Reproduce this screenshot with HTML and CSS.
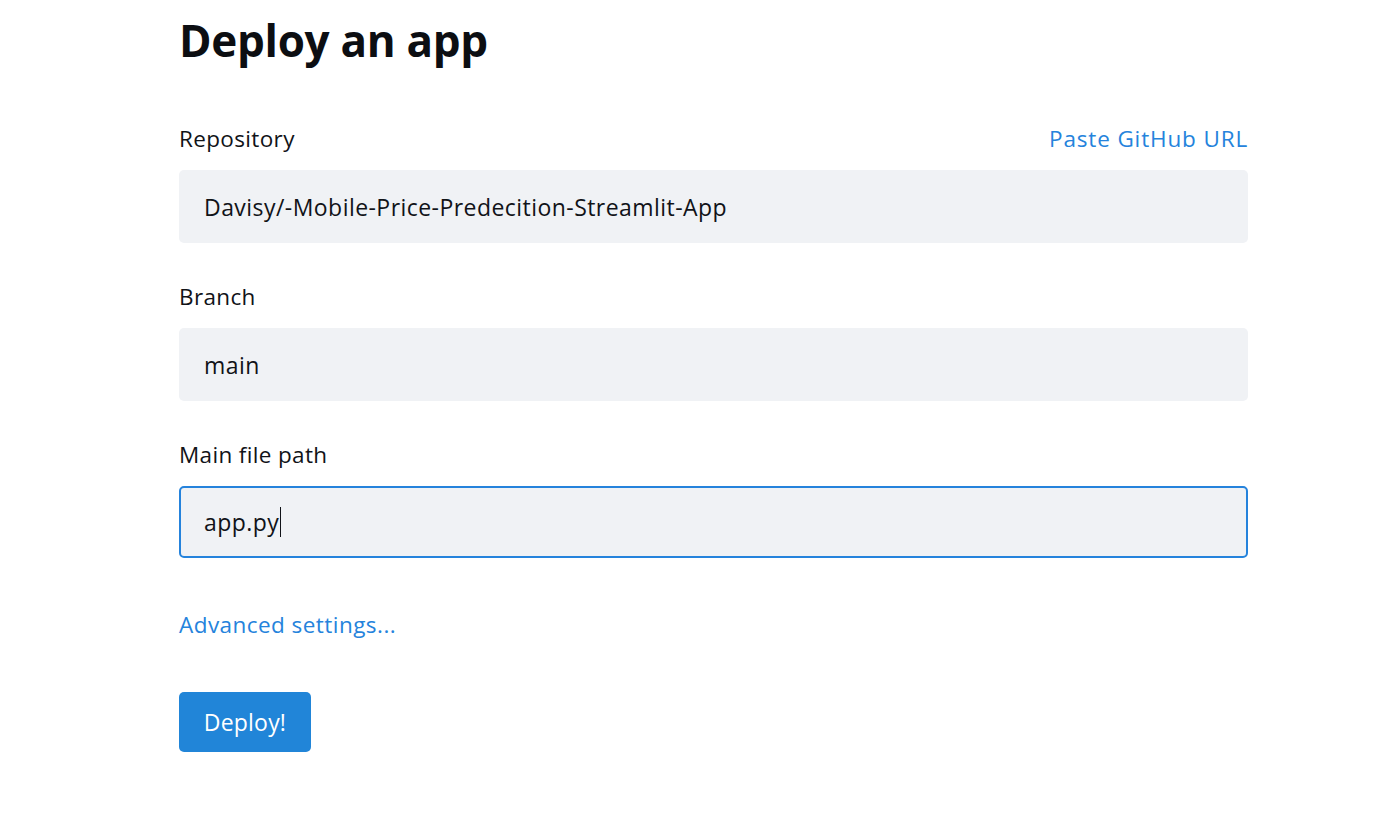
FILE: index.html
```html
<!DOCTYPE html>
<html lang="en">
<head>
<meta charset="utf-8">
<title>Deploy an app</title>
<link rel="stylesheet" href="styles.css">
</head>
<body>
<main class="page">
  <h1 class="title">Deploy an app</h1>
  <form class="form">
    <div class="field">
      <div class="label-row">
        <label class="label" for="repo">Repository</label>
        <a class="link link-wide" href="#">Paste GitHub URL</a>
      </div>
      <div class="input" id="repo">Davisy/-Mobile-Price-Predecition-Streamlit-App</div>
    </div>
    <div class="field">
      <div class="label-row">
        <label class="label" for="branch">Branch</label>
      </div>
      <div class="input" id="branch">main</div>
    </div>
    <div class="field">
      <div class="label-row">
        <label class="label" for="path">Main file path</label>
      </div>
      <div class="input input-focus" id="path">app.py<span class="caret"></span></div>
    </div>
    <a class="link advanced" href="#">Advanced settings...</a>
    <div class="actions">
      <button class="btn" type="button">Deploy!</button>
    </div>
  </form>
</main>
</body>
</html>
```
FILE: styles.css
```css
html, body {
  margin: 0;
  padding: 0;
  background: #ffffff;
}
body {
  font-family: "Open Sans", "Lato", "Liberation Sans", sans-serif;
  color: #111318;
}
.page {
  width: 1069px;
  margin-left: 179px;
  padding-top: 12px;
}
.title {
  margin: 0;
  font-size: 44px;
  font-weight: 700;
  line-height: 56px;
  color: #0c0e12;
  letter-spacing: -0.3px;
}
.form {
  display: flex;
  flex-direction: column;
  margin-top: 55px;
}
.field {
  display: flex;
  flex-direction: column;
  margin-bottom: 38px;
}
.label-row {
  display: flex;
  justify-content: space-between;
  align-items: center;
  height: 30px;
  margin-bottom: 17px;
}
.label {
  font-size: 22.5px;
  letter-spacing: 0.35px;
  color: #111318;
}
.link {
  font-size: 22.5px;
  letter-spacing: 0.45px;
  color: #2583dc;
  text-decoration: none;
}
.link-wide {
  letter-spacing: 0.85px;
}
.input {
  box-sizing: border-box;
  height: 73px;
  background: #f0f2f5;
  border-radius: 5px;
  padding: 0 25px;
  display: flex;
  align-items: center;
  font-size: 23px;
  letter-spacing: 0.45px;
  color: #111318;
}
.input-focus {
  height: 72px;
  border: 2px solid #2583dc;
  padding: 0 23px;
}
.caret {
  display: inline-block;
  width: 1px;
  height: 30px;
  background: #111318;
  margin-left: 1px;
}
.advanced {
  align-self: flex-start;
  margin-top: 14px;
  line-height: 30px;
}
.actions {
  margin-top: 52px;
}
.btn {
  box-sizing: border-box;
  width: 132px;
  height: 60px;
  border: none;
  border-radius: 5px;
  background: #2185d8;
  color: #ffffff;
  font-family: inherit;
  font-size: 23px;
  letter-spacing: 0.2px;
  padding: 0;
  cursor: pointer;
}
```
